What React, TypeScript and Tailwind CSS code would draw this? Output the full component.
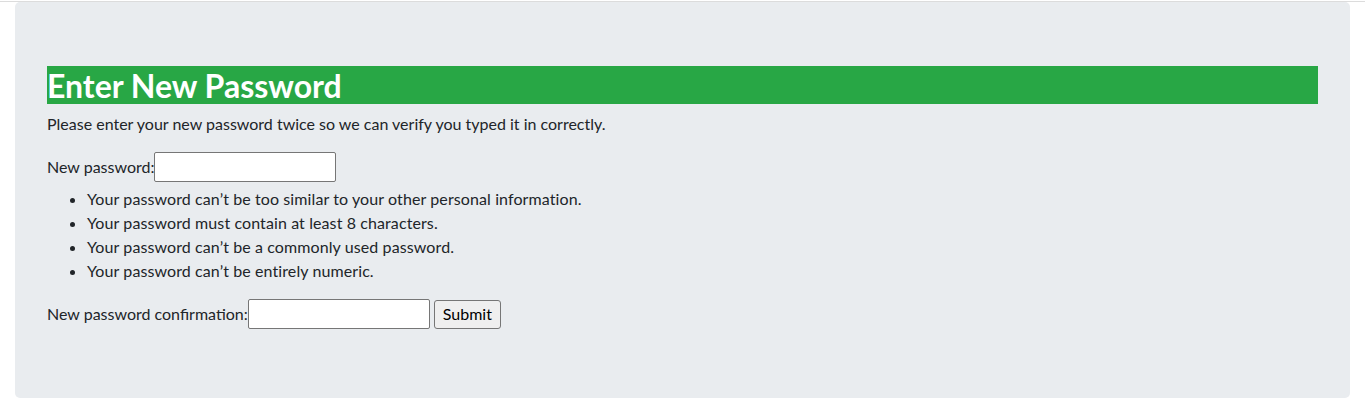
export default function App() {
  const rules = [
    "Your password can’t be too similar to your other personal information.",
    "Your password must contain at least 8 characters.",
    "Your password can’t be a commonly used password.",
    "Your password can’t be entirely numeric.",
  ];

  return (
    <div className="min-h-screen bg-white font-['Lato',sans-serif] text-[16px] text-[#212529]">
      <div className="mt-px border-t border-[#dcdcdc]" />
      <div className="mx-[15px] rounded-[5px] bg-[#e9ecef] px-8 pt-16 pb-[69px]">
        <h2 className="bg-[#28a745] pt-px text-[32px] font-bold leading-[37px] text-white">
          Enter New Password
        </h2>
        <p className="mt-2 leading-6">
          Please enter your new password twice so we can verify you typed it in correctly.
        </p>

        <form className="mt-4">
          <div className="flex h-[30px] items-center">
            <label htmlFor="pw1">New password:</label>
            <input
              id="pw1"
              type="password"
              className="h-[30px] w-[182px] rounded-[2px] border border-[#767676] bg-white"
            />
          </div>
          <ul className="mt-[5px] list-disc pl-10 leading-6 tracking-[0.1px]">
            {rules.map((r) => (
              <li key={r}>{r}</li>
            ))}
          </ul>
          <div className="mt-4 flex h-[30px] items-center">
            <label htmlFor="pw2">New password confirmation:</label>
            <input
              id="pw2"
              type="password"
              className="h-[30px] w-[182px] rounded-[2px] border border-[#767676] bg-white"
            />
            <button
              type="submit"
              className="ml-1 h-[29px] rounded-[3px] border border-[#767676] bg-[#efefef] px-2 text-[#000]"
            >
              Submit
            </button>
          </div>
        </form>
      </div>
    </div>
  );
}
